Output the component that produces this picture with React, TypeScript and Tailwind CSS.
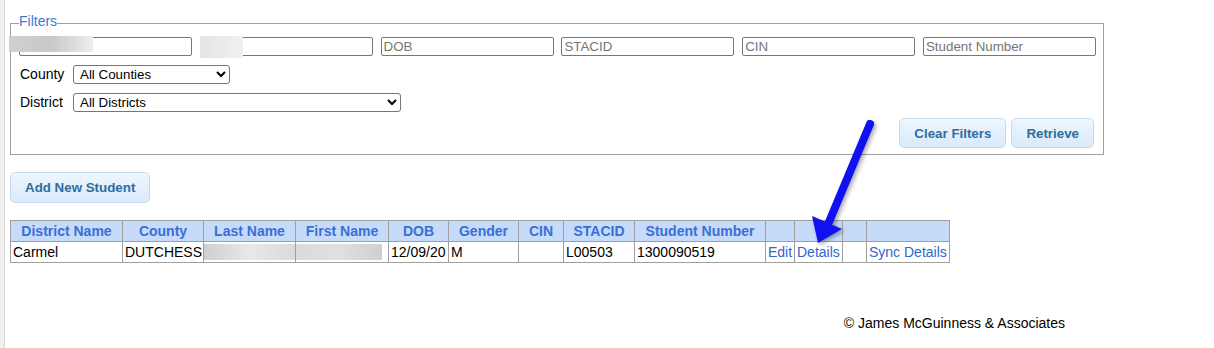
import React from 'react';

const inputCls =
    "block w-[173px] h-[19px] border border-[#767676] rounded-[2px] px-[2px] text-[13.33px] bg-white placeholder:text-[#757575] outline-none";
const selectCls =
    "block h-[19px] border border-[#767676] rounded-[3px] pl-[2px] text-[13.33px] bg-white text-black outline-none";
const btnCls =
    "h-[30px] px-[14px] border border-[#c5dbec] rounded-[5px] bg-linear-to-b from-[#eef6fe] to-[#d9eafb] text-[13.33px] font-bold text-[#2e6e9e]";
const thCls = "h-[21px] border border-[#a0a0a0] px-[2px] py-0 text-center font-bold text-[#3a6fd6] leading-[19px]";
const tdCls = "h-[21px] border border-[#a0a0a0] px-[2px] py-0 text-left font-normal leading-[19px]";
const blurCls = "h-[21px] border border-[#a0a0a0] p-0";

export default function App() {
    return (
        <div className="relative flex min-h-[348px] font-['Liberation_Sans',Arial,sans-serif] text-[14px] text-black bg-white">
            {/* left gutter */}
            <div className="w-[5px] shrink-0 bg-[#efefef] border-r border-[#d8d8d8]" />

            <div className="flex-1 pl-[5px]">
                {/* Filters */}
                <fieldset className="mt-[14px] w-[1094px] border border-[#a0a0a0] pl-2 pr-[7px] pb-[6px] leading-[19px]">
                    <legend className="px-0 pb-[5px] text-[14px] leading-none text-[#3a7bd5]">Filters</legend>

                    <div className="flex gap-[7.8px] mt-[4px]">
                        <div className="relative">
                            <input className={inputCls} />
                            <div className="absolute -left-[10px] -top-[1px] w-[84px] h-[16px] bg-linear-to-r from-[#d0d0d0] via-[#c8c8c8] to-[#eeeeee]" />
                        </div>
                        <div className="relative">
                            <input className={inputCls} />
                            <div className="absolute left-0 -top-[1px] w-[43px] h-[22px] bg-linear-to-r from-[#e4e4e4] to-[#f0f0f0]" />
                        </div>
                        <input className={inputCls} placeholder="DOB" />
                        <input className={inputCls} placeholder="STACID" />
                        <input className={inputCls} placeholder="CIN" />
                        <input className={inputCls} placeholder="Student Number" />
                    </div>

                    <div className="flex items-center mt-[9px]">
                        <label className="w-[54px] pl-[1px]">County</label>
                        <select className={`${selectCls} w-[157px]`} defaultValue="all">
                            <option value="all">All Counties</option>
                        </select>
                    </div>

                    <div className="flex items-center mt-[9px]">
                        <label className="w-[54px] pl-[1px]">District</label>
                        <select className={`${selectCls} w-[328px]`} defaultValue="all">
                            <option value="all">All Districts</option>
                        </select>
                    </div>

                    <div className="flex justify-end gap-[5px] mt-[6px] mr-[2px]">
                        <button className={`${btnCls} px-[13px]`}>Clear Filters</button>
                        <button className={btnCls}>Retrieve</button>
                    </div>
                </fieldset>

                <button className={`${btnCls} block h-[31px] mt-[17px]`}>Add New Student</button>

                {/* Students */}
                <table className="mt-[17px] table-fixed border-collapse w-[940px]">
                    <thead>
                        <tr className="bg-[#c6daf9]">
                            <th className={`${thCls} w-[112px]`}>District Name</th>
                            <th className={`${thCls} w-[81px]`}>County</th>
                            <th className={`${thCls} w-[92px]`}>Last Name</th>
                            <th className={`${thCls} w-[93px]`}>First Name</th>
                            <th className={`${thCls} w-[60px]`}>DOB</th>
                            <th className={`${thCls} w-[70px]`}>Gender</th>
                            <th className={`${thCls} w-[45px]`}>CIN</th>
                            <th className={`${thCls} w-[71px]`}>STACID</th>
                            <th className={`${thCls} w-[131px]`}>Student Number</th>
                            <th className={`${thCls} w-[29px]`}></th>
                            <th className={`${thCls} w-[48px]`}></th>
                            <th className={`${thCls} w-[24px]`}></th>
                            <th className={`${thCls} w-[83px]`}></th>
                        </tr>
                    </thead>
                    <tbody>
                        <tr>
                            <td className={tdCls}>Carmel</td>
                            <td className={tdCls}>DUTCHESS</td>
                            <td className={blurCls}>
                                <div className="h-[16px] bg-linear-to-r from-[#cfcfcf] via-[#e8e8e8] to-[#dadada]" />
                            </td>
                            <td className={blurCls}>
                                <div className="h-[16px] mr-[6px] bg-linear-to-r from-[#dadada] via-[#e0e0e0] to-[#cfcfcf]" />
                            </td>
                            <td className={tdCls}>12/09/20</td>
                            <td className={tdCls}>M</td>
                            <td className={tdCls}></td>
                            <td className={tdCls}>L00503</td>
                            <td className={tdCls}>1300090519</td>
                            <td className={tdCls}><a className="text-[#3366cc] cursor-pointer">Edit</a></td>
                            <td className={tdCls}><a className="text-[#3366cc] cursor-pointer">Details</a></td>
                            <td className={tdCls}></td>
                            <td className={tdCls}><a className="text-[#3366cc] cursor-pointer">Sync Details</a></td>
                        </tr>
                    </tbody>
                </table>

                <div className="flex justify-end pr-[149px] mt-[50px]">
                    © James McGuinness &amp; Associates
                </div>
            </div>

            {/* annotation arrow */}
            <svg
                className="absolute left-0 top-0 pointer-events-none drop-shadow-[2px_2px_2px_rgba(0,0,0,0.35)]"
                width="1214"
                height="348"
                viewBox="0 0 1214 348"
            >
                <line x1="870" y1="124" x2="829" y2="222" stroke="#1010f0" strokeWidth="8" strokeLinecap="round" />
                <polygon points="812,216 842,229 818,243" fill="#1010f0" />
            </svg>
        </div>
    );
}
